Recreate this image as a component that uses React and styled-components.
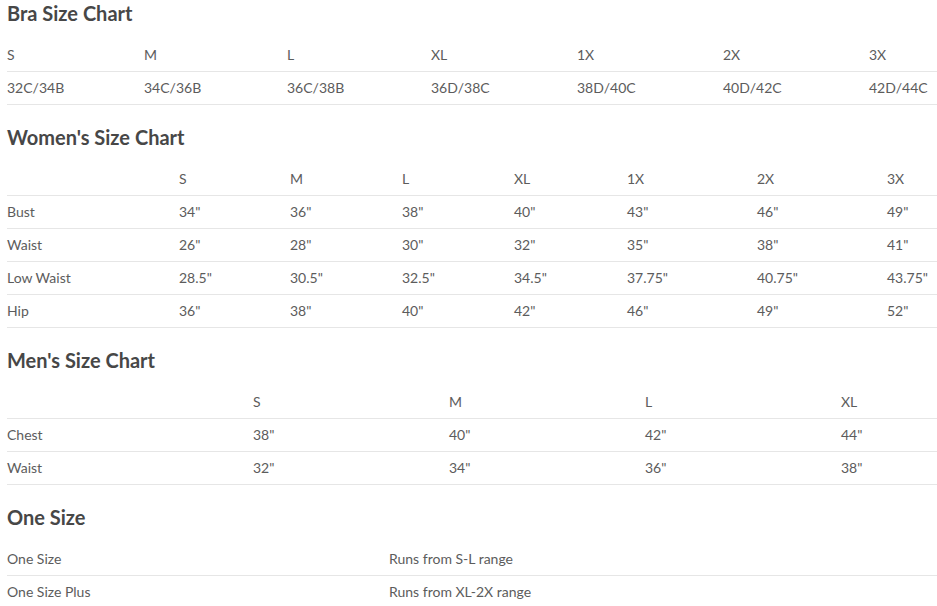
import React from "react";
import styled, { createGlobalStyle } from "styled-components";

const GlobalStyle = createGlobalStyle`
  html, body {
    margin: 0;
    padding: 0;
    background: #ffffff;
  }
  body {
    font-family: Lato, "Open Sans", "Liberation Sans", sans-serif;
    overflow: hidden;
  }
`;

const Page = styled.div`
  padding-left: 7px;
  width: 930px;
`;

const Section = styled.section`
  margin-bottom: 19px;
`;

const Title = styled.h2`
  margin: 0 0 12px 0;
  font-size: 20px;
  line-height: 27px;
  font-weight: 700;
  color: #474747;
`;

const Row = styled.div`
  display: grid;
  grid-template-columns: ${(p) => p.$cols};
  height: 30px;
  padding-bottom: 2px;
  align-items: center;
  border-bottom: 1px solid #e6e6e6;
`;

const Cell = styled.div`
  font-size: 14px;
  color: #5c5c5c;
  white-space: nowrap;
`;

const charts = [
  {
    title: "Bra Size Chart",
    cols: "137px 143px 144px 146px 146px 146px 1fr",
    rows: [
      ["S", "M", "L", "XL", "1X", "2X", "3X"],
      ["32C/34B", "34C/36B", "36C/38B", "36D/38C", "38D/40C", "40D/42C", "42D/44C"],
    ],
  },
  {
    title: "Women's Size Chart",
    cols: "172px 111px 112px 112px 113px 130px 130px 1fr",
    rows: [
      ["", "S", "M", "L", "XL", "1X", "2X", "3X"],
      ["Bust", "34\"", "36\"", "38\"", "40\"", "43\"", "46\"", "49\""],
      ["Waist", "26\"", "28\"", "30\"", "32\"", "35\"", "38\"", "41\""],
      ["Low Waist", "28.5\"", "30.5\"", "32.5\"", "34.5\"", "37.75\"", "40.75\"", "43.75\""],
      ["Hip", "36\"", "38\"", "40\"", "42\"", "46\"", "49\"", "52\""],
    ],
  },
  {
    title: "Men's Size Chart",
    cols: "246px 196px 196px 196px 1fr",
    rows: [
      ["", "S", "M", "L", "XL"],
      ["Chest", "38\"", "40\"", "42\"", "44\""],
      ["Waist", "32\"", "34\"", "36\"", "38\""],
    ],
  },
  {
    title: "One Size",
    cols: "382px 1fr",
    rows: [
      ["One Size", "Runs from S-L range"],
      ["One Size Plus", "Runs from XL-2X range"],
    ],
  },
];

const App = () => {
  return (
    <>
      <GlobalStyle />
      <Page>
        {charts.map((chart) => (
          <Section key={chart.title}>
            <Title>{chart.title}</Title>
            {chart.rows.map((row, i) => (
              <Row key={i} $cols={chart.cols}>
                {row.map((cell, j) => (
                  <Cell key={j}>{cell}</Cell>
                ))}
              </Row>
            ))}
          </Section>
        ))}
      </Page>
    </>
  );
};

export default App;
